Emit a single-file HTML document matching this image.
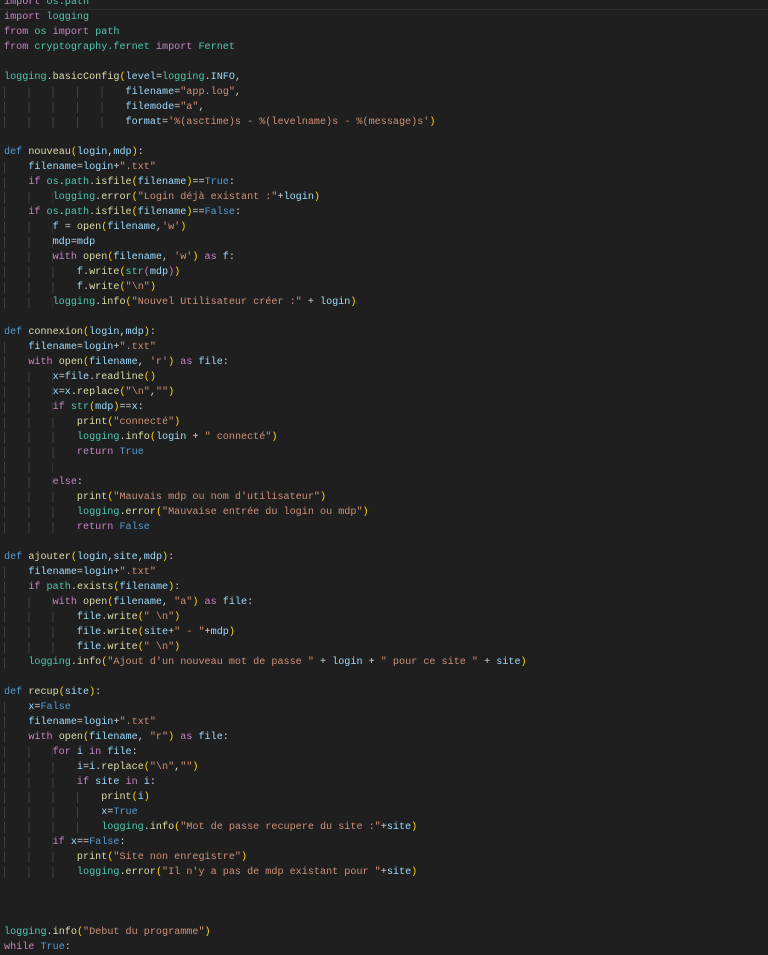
<!DOCTYPE html>
<html><head><meta charset="utf-8"><style>
html,body{margin:0;padding:0;background:#1f1f1f;width:768px;height:946px;overflow:hidden}
pre{margin:0;position:absolute;top:-5px;left:4px;font-family:"Liberation Mono",monospace;font-size:10.15px;line-height:15px;color:#d4d4d4;white-space:pre}
.sep{position:absolute;top:9px;left:0;width:768px;height:1px;background:#2b2b2b}
.k{color:#c586c0}.d{color:#569cd6}.f{color:#dcdcaa}.v{color:#9cdcfe}.s{color:#ce9178}.m{color:#4ec9b0}.y{color:#ffd700}.p{color:#da70d6}.b{color:#179fff}
.i{background:repeating-linear-gradient(to right,#404040 0 1px,transparent 1px 24.36px)}
</style></head><body>
<pre><span class="k">import</span> <span class="m">os.path</span>
<span class="k">import</span> <span class="m">logging</span>
<span class="k">from</span> <span class="m">os</span> <span class="k">import</span> <span class="m">path</span>
<span class="k">from</span> <span class="m">cryptography.fernet</span> <span class="k">import</span> <span class="m">Fernet</span>

<span class="m">logging</span>.<span class="f">basicConfig</span><span class="y">(</span><span class="v">level</span>=<span class="m">logging</span>.<span class="v">INFO</span>,
<span class="i">                    </span><span class="v">filename</span>=<span class="s">"app.log"</span>,
<span class="i">                    </span><span class="v">filemode</span>=<span class="s">"a"</span>,
<span class="i">                    </span><span class="v">format</span>=<span class="s">'%(asctime)s - %(levelname)s - %(message)s'</span><span class="y">)</span>

<span class="d">def</span> <span class="f">nouveau</span><span class="y">(</span><span class="v">login</span>,<span class="v">mdp</span><span class="y">)</span>:
<span class="i">    </span><span class="v">filename</span>=<span class="v">login</span>+<span class="s">".txt"</span>
<span class="i">    </span><span class="k">if</span> <span class="m">os</span>.<span class="m">path</span>.<span class="f">isfile</span><span class="y">(</span><span class="v">filename</span><span class="y">)</span>==<span class="d">True</span>:
<span class="i">        </span><span class="m">logging</span>.<span class="f">error</span><span class="y">(</span><span class="s">"Login déjà existant :"</span>+<span class="v">login</span><span class="y">)</span>
<span class="i">    </span><span class="k">if</span> <span class="m">os</span>.<span class="m">path</span>.<span class="f">isfile</span><span class="y">(</span><span class="v">filename</span><span class="y">)</span>==<span class="d">False</span>:
<span class="i">        </span><span class="v">f</span> = <span class="f">open</span><span class="y">(</span><span class="v">filename</span>,<span class="s">'w'</span><span class="y">)</span>
<span class="i">        </span><span class="v">mdp</span>=<span class="v">mdp</span>
<span class="i">        </span><span class="k">with</span> <span class="f">open</span><span class="y">(</span><span class="v">filename</span>, <span class="s">'w'</span><span class="y">)</span> <span class="k">as</span> <span class="v">f</span>:
<span class="i">            </span><span class="v">f</span>.<span class="f">write</span><span class="y">(</span><span class="m">str</span><span class="p">(</span><span class="v">mdp</span><span class="p">)</span><span class="y">)</span>
<span class="i">            </span><span class="v">f</span>.<span class="f">write</span><span class="y">(</span><span class="s">"\n"</span><span class="y">)</span>
<span class="i">        </span><span class="m">logging</span>.<span class="f">info</span><span class="y">(</span><span class="s">"Nouvel Utilisateur créer :"</span> + <span class="v">login</span><span class="y">)</span>

<span class="d">def</span> <span class="f">connexion</span><span class="y">(</span><span class="v">login</span>,<span class="v">mdp</span><span class="y">)</span>:
<span class="i">    </span><span class="v">filename</span>=<span class="v">login</span>+<span class="s">".txt"</span>
<span class="i">    </span><span class="k">with</span> <span class="f">open</span><span class="y">(</span><span class="v">filename</span>, <span class="s">'r'</span><span class="y">)</span> <span class="k">as</span> <span class="v">file</span>:
<span class="i">        </span><span class="v">x</span>=<span class="v">file</span>.<span class="f">readline</span><span class="y">()</span>
<span class="i">        </span><span class="v">x</span>=<span class="v">x</span>.<span class="f">replace</span><span class="y">(</span><span class="s">"\n"</span>,<span class="s">""</span><span class="y">)</span>
<span class="i">        </span><span class="k">if</span> <span class="m">str</span><span class="y">(</span><span class="v">mdp</span><span class="y">)</span>==<span class="v">x</span>:
<span class="i">            </span><span class="f">print</span><span class="y">(</span><span class="s">"connecté"</span><span class="y">)</span>
<span class="i">            </span><span class="m">logging</span>.<span class="f">info</span><span class="y">(</span><span class="v">login</span> + <span class="s">" connecté"</span><span class="y">)</span>
<span class="i">            </span><span class="k">return</span> <span class="d">True</span>
<span class="i">        </span>
<span class="i">        </span><span class="k">else</span>:
<span class="i">            </span><span class="f">print</span><span class="y">(</span><span class="s">"Mauvais mdp ou nom d'utilisateur"</span><span class="y">)</span>
<span class="i">            </span><span class="m">logging</span>.<span class="f">error</span><span class="y">(</span><span class="s">"Mauvaise entrée du login ou mdp"</span><span class="y">)</span>
<span class="i">            </span><span class="k">return</span> <span class="d">False</span>

<span class="d">def</span> <span class="f">ajouter</span><span class="y">(</span><span class="v">login</span>,<span class="v">site</span>,<span class="v">mdp</span><span class="y">)</span>:
<span class="i">    </span><span class="v">filename</span>=<span class="v">login</span>+<span class="s">".txt"</span>
<span class="i">    </span><span class="k">if</span> <span class="m">path</span>.<span class="f">exists</span><span class="y">(</span><span class="v">filename</span><span class="y">)</span>:
<span class="i">        </span><span class="k">with</span> <span class="f">open</span><span class="y">(</span><span class="v">filename</span>, <span class="s">"a"</span><span class="y">)</span> <span class="k">as</span> <span class="v">file</span>:
<span class="i">            </span><span class="v">file</span>.<span class="f">write</span><span class="y">(</span><span class="s">" \n"</span><span class="y">)</span>
<span class="i">            </span><span class="v">file</span>.<span class="f">write</span><span class="y">(</span><span class="v">site</span>+<span class="s">" - "</span>+<span class="v">mdp</span><span class="y">)</span>
<span class="i">            </span><span class="v">file</span>.<span class="f">write</span><span class="y">(</span><span class="s">" \n"</span><span class="y">)</span>
<span class="i">    </span><span class="m">logging</span>.<span class="f">info</span><span class="y">(</span><span class="s">"Ajout d'un nouveau mot de passe "</span> + <span class="v">login</span> + <span class="s">" pour ce site "</span> + <span class="v">site</span><span class="y">)</span>

<span class="d">def</span> <span class="f">recup</span><span class="y">(</span><span class="v">site</span><span class="y">)</span>:
<span class="i">    </span><span class="v">x</span>=<span class="d">False</span>
<span class="i">    </span><span class="v">filename</span>=<span class="v">login</span>+<span class="s">".txt"</span>
<span class="i">    </span><span class="k">with</span> <span class="f">open</span><span class="y">(</span><span class="v">filename</span>, <span class="s">"r"</span><span class="y">)</span> <span class="k">as</span> <span class="v">file</span>:
<span class="i">        </span><span class="k">for</span> <span class="v">i</span> <span class="k">in</span> <span class="v">file</span>:
<span class="i">            </span><span class="v">i</span>=<span class="v">i</span>.<span class="f">replace</span><span class="y">(</span><span class="s">"\n"</span>,<span class="s">""</span><span class="y">)</span>
<span class="i">            </span><span class="k">if</span> <span class="v">site</span> <span class="k">in</span> <span class="v">i</span>:
<span class="i">                </span><span class="f">print</span><span class="y">(</span><span class="v">i</span><span class="y">)</span>
<span class="i">                </span><span class="v">x</span>=<span class="d">True</span>
<span class="i">                </span><span class="m">logging</span>.<span class="f">info</span><span class="y">(</span><span class="s">"Mot de passe recupere du site :"</span>+<span class="v">site</span><span class="y">)</span>
<span class="i">        </span><span class="k">if</span> <span class="v">x</span>==<span class="d">False</span>:
<span class="i">            </span><span class="f">print</span><span class="y">(</span><span class="s">"Site non enregistre"</span><span class="y">)</span>
<span class="i">            </span><span class="m">logging</span>.<span class="f">error</span><span class="y">(</span><span class="s">"Il n'y a pas de mdp existant pour "</span>+<span class="v">site</span><span class="y">)</span>



<span class="m">logging</span>.<span class="f">info</span><span class="y">(</span><span class="s">"Debut du programme"</span><span class="y">)</span>
<span class="k">while</span> <span class="d">True</span>:
</pre>
<div class="sep"></div>
</body></html>
